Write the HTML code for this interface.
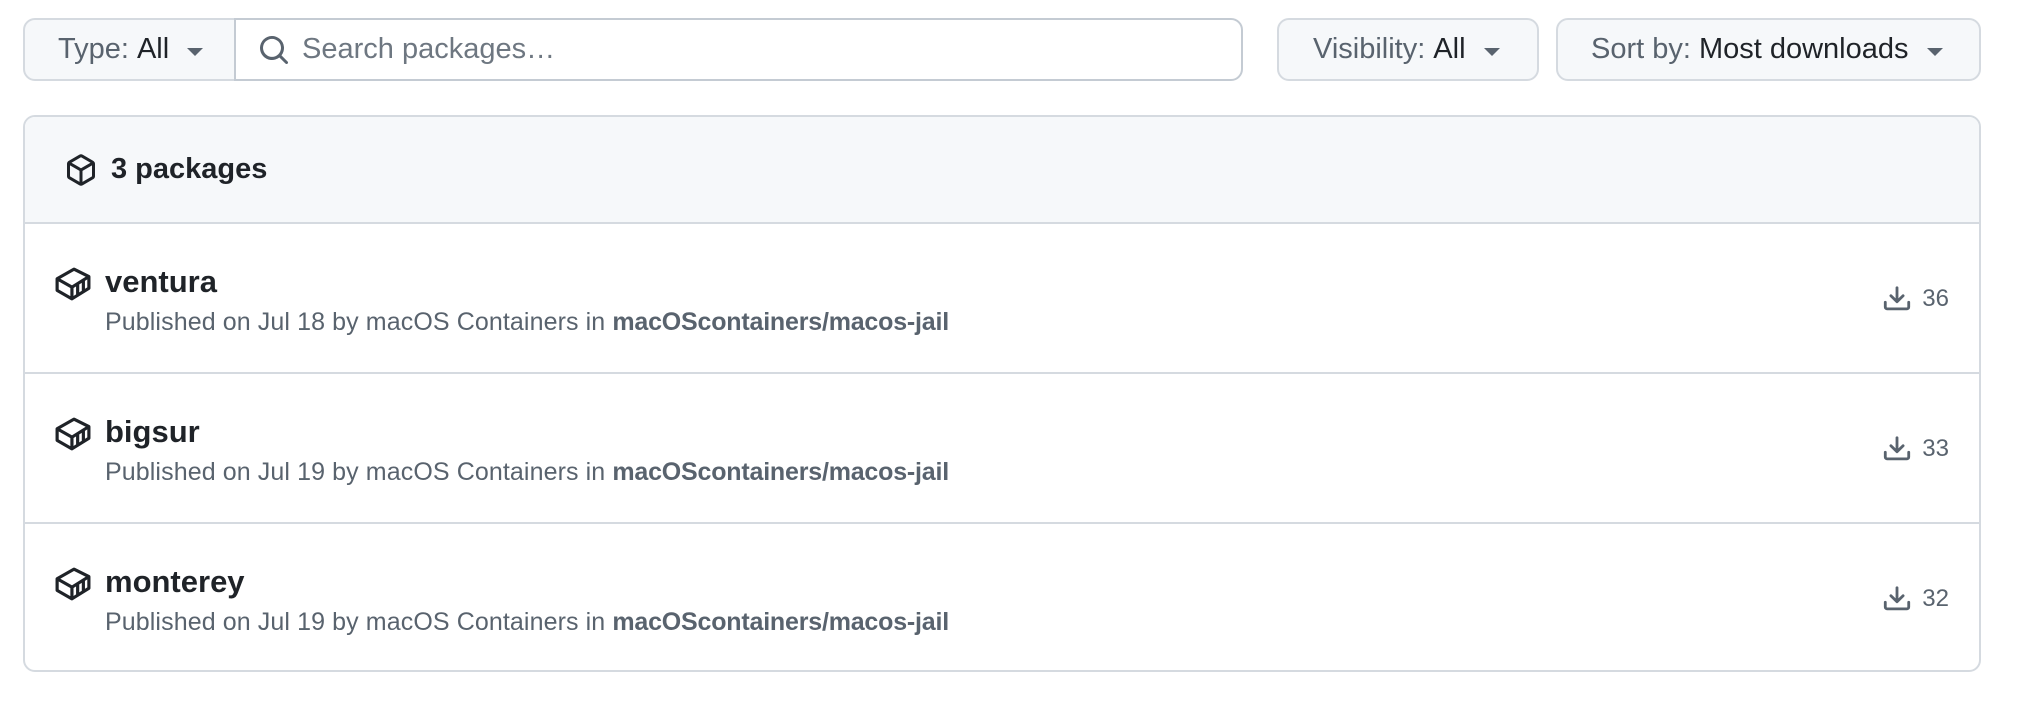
<!DOCTYPE html>
<html><head><meta charset="utf-8"><style>
*{box-sizing:border-box;margin:0;padding:0}
body{width:2036px;height:720px;background:#fff;font-family:"Liberation Sans",Arial,sans-serif;color:#1f2328;position:relative;overflow:hidden}
.btn{position:absolute;top:18px;height:63px;background:#f6f8fa;border:2px solid #d5dae0;font-size:29px;color:#59636e;display:flex;align-items:center;white-space:nowrap}
.btn b{font-weight:normal;color:#1f2328;margin-left:8px}
.caret{display:inline-block;width:0;height:0;border-left:8px solid transparent;border-right:8px solid transparent;border-top:8px solid #59636e;margin-left:18px;margin-top:4px}
.search{position:absolute;left:234px;top:18px;width:1009px;height:63px;border:2px solid #c4cbd3;border-radius:0 12px 12px 0;display:flex;align-items:center;font-size:29px;color:#6e7781}
.box{position:absolute;left:23px;top:115px;width:1958px;height:557px;border:2px solid #d5dae0;border-radius:12px;overflow:hidden}
.hdr{height:107px;background:#f6f8fa;border-bottom:2px solid #d5dae0;display:flex;align-items:center;padding-left:40px;font-size:29px;font-weight:bold}
.row{height:150px;border-bottom:2px solid #d5dae0;position:relative}
.row:last-child{border-bottom:none}
.name{position:absolute;left:80px;top:40px;font-size:31px;font-weight:bold;color:#1f2328}
.meta{position:absolute;left:80px;top:84px;font-size:25px;letter-spacing:0.1px;color:#59636e}
.meta b{color:#59636e;letter-spacing:-0.2px}
.ri{position:absolute;left:30px;top:42px}
.dl{position:absolute;right:30px;top:60px;font-size:24px;color:#59636e;display:flex;align-items:center}
</style></head><body>
<div class="btn" style="left:23px;width:213px;border-radius:12px 0 0 12px;padding-left:33px">Type:<b>All</b><span class="caret"></span></div>
<div class="search"><svg width="32" height="32" viewBox="0 0 16 16" style="margin-left:22px;margin-right:12px" fill="#59636e"><path d="M10.68 11.74a6 6 0 0 1-7.922-8.982 6 6 0 0 1 8.982 7.922l3.04 3.04a.749.749 0 0 1-.326 1.275.749.749 0 0 1-.734-.215ZM11.5 7a4.499 4.499 0 1 0-8.997 0A4.499 4.499 0 0 0 11.5 7Z"/></svg>Search packages…</div>
<div class="btn" style="left:1277px;width:262px;border-radius:12px;padding-left:34px">Visibility:<b>All</b><span class="caret"></span></div>
<div class="btn" style="left:1556px;width:425px;border-radius:12px;padding-left:33px">Sort by:<b>Most downloads</b><span class="caret"></span></div>
<div class="box">
<div class="hdr"><svg width="32" height="32" viewBox="0 0 16 16" fill="#1f2328" style="margin-right:14px"><path d="m8.878.392 5.25 3.045c.54.314.872.89.872 1.514v6.098a1.75 1.75 0 0 1-.872 1.514l-5.25 3.045a1.75 1.75 0 0 1-1.756 0l-5.250-3.045A1.75 1.75 0 0 1 1 11.049V4.951c0-.624.332-1.201.872-1.514L7.122.392a1.75 1.75 0 0 1 1.756 0ZM7.875 1.69l-4.63 2.685L8 7.133l4.755-2.758-4.63-2.685a.248.248 0 0 0-.25 0ZM2.5 5.677v5.372c0 .09.047.171.125.216l4.625 2.683V8.432Zm6.25 8.271 4.625-2.683a.25.25 0 0 0 .125-.216V5.677L8.75 8.432Z"/></svg>3 packages</div>
<div class="row">
<svg class="ri" width="36" height="36" viewBox="0 0 17 17" fill="none" stroke="#1f2328" stroke-width="1.5" stroke-linejoin="round"><path d="M1 6 L9 1.5 L16 5 L16 10.5 L8 15.5 L1 11.5 Z M1 6 L8 10 L16 5 M8 10 V15.5 M10.7 8.5 V13.8 M13.4 7 V12.2"/></svg>
<div class="name">ventura</div>
<div class="meta">Published on Jul 18 by macOS Containers in <b>macOScontainers/macos-jail</b></div>
<div class="dl"><svg width="30" height="30" viewBox="0 0 16 16" fill="#59636e" style="margin-right:10px"><path d="M2.75 14A1.75 1.75 0 0 1 1 12.25v-2.5a.75.75 0 0 1 1.5 0v2.5c0 .138.112.25.25.25h10.5a.25.25 0 0 0 .25-.25v-2.5a.75.75 0 0 1 1.5 0v2.5A1.75 1.75 0 0 1 13.25 14Z"/><path d="M7.25 7.689V2a.75.75 0 0 1 1.5 0v5.689l1.97-1.969a.749.749 0 1 1 1.06 1.06l-3.25 3.25a.749.749 0 0 1-1.06 0L4.22 6.78a.749.749 0 1 1 1.06-1.06l1.97 1.969Z"/></svg>36</div>
</div>
<div class="row">
<svg class="ri" width="36" height="36" viewBox="0 0 17 17" fill="none" stroke="#1f2328" stroke-width="1.5" stroke-linejoin="round"><path d="M1 6 L9 1.5 L16 5 L16 10.5 L8 15.5 L1 11.5 Z M1 6 L8 10 L16 5 M8 10 V15.5 M10.7 8.5 V13.8 M13.4 7 V12.2"/></svg>
<div class="name">bigsur</div>
<div class="meta">Published on Jul 19 by macOS Containers in <b>macOScontainers/macos-jail</b></div>
<div class="dl"><svg width="30" height="30" viewBox="0 0 16 16" fill="#59636e" style="margin-right:10px"><path d="M2.75 14A1.75 1.75 0 0 1 1 12.25v-2.5a.75.75 0 0 1 1.5 0v2.5c0 .138.112.25.25.25h10.5a.25.25 0 0 0 .25-.25v-2.5a.75.75 0 0 1 1.5 0v2.5A1.75 1.75 0 0 1 13.25 14Z"/><path d="M7.25 7.689V2a.75.75 0 0 1 1.5 0v5.689l1.97-1.969a.749.749 0 1 1 1.06 1.06l-3.25 3.25a.749.749 0 0 1-1.06 0L4.22 6.78a.749.749 0 1 1 1.06-1.06l1.97 1.969Z"/></svg>33</div>
</div>
<div class="row">
<svg class="ri" width="36" height="36" viewBox="0 0 17 17" fill="none" stroke="#1f2328" stroke-width="1.5" stroke-linejoin="round"><path d="M1 6 L9 1.5 L16 5 L16 10.5 L8 15.5 L1 11.5 Z M1 6 L8 10 L16 5 M8 10 V15.5 M10.7 8.5 V13.8 M13.4 7 V12.2"/></svg>
<div class="name">monterey</div>
<div class="meta">Published on Jul 19 by macOS Containers in <b>macOScontainers/macos-jail</b></div>
<div class="dl"><svg width="30" height="30" viewBox="0 0 16 16" fill="#59636e" style="margin-right:10px"><path d="M2.75 14A1.75 1.75 0 0 1 1 12.25v-2.5a.75.75 0 0 1 1.5 0v2.5c0 .138.112.25.25.25h10.5a.25.25 0 0 0 .25-.25v-2.5a.75.75 0 0 1 1.5 0v2.5A1.75 1.75 0 0 1 13.25 14Z"/><path d="M7.25 7.689V2a.75.75 0 0 1 1.5 0v5.689l1.97-1.969a.749.749 0 1 1 1.06 1.06l-3.25 3.25a.749.749 0 0 1-1.06 0L4.22 6.78a.749.749 0 1 1 1.06-1.06l1.97 1.969Z"/></svg>32</div>
</div>
</div>
</body></html>
